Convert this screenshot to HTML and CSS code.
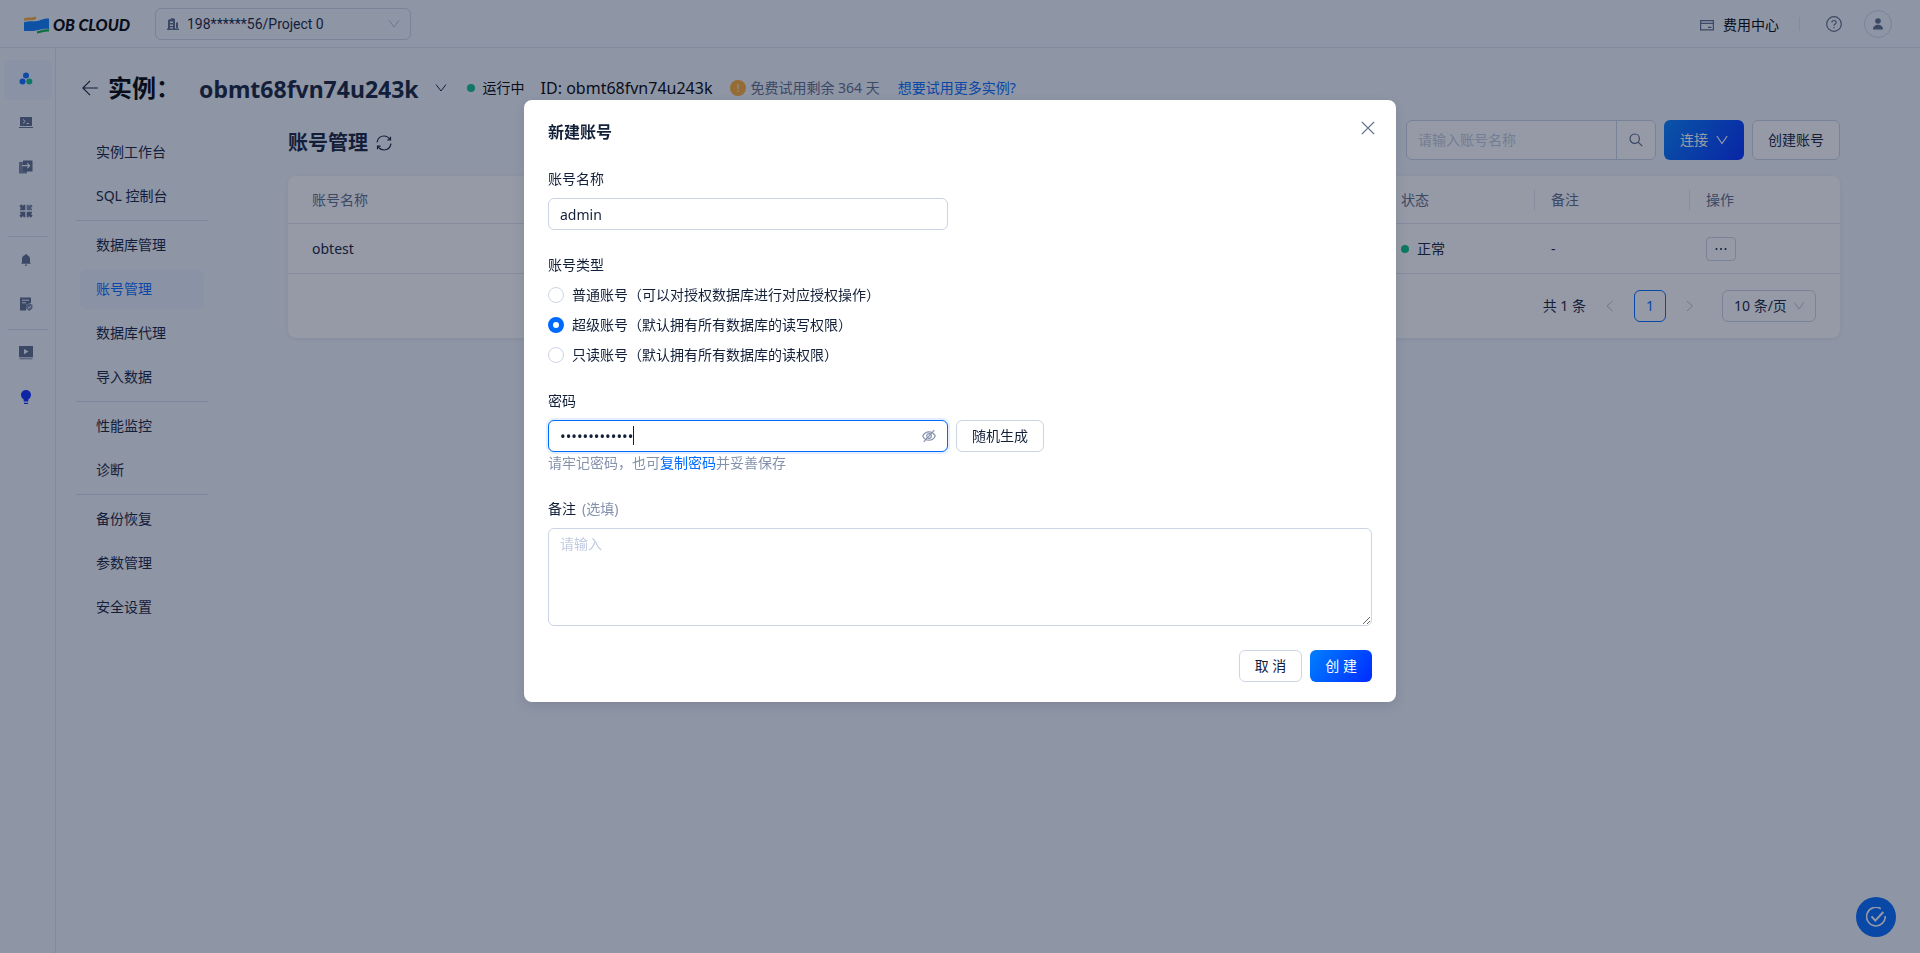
FILE: index.html
```html
<!DOCTYPE html>
<html lang="zh-CN">
<head>
<meta charset="utf-8">
<meta name="viewport" content="width=device-width, initial-scale=1">
<title>OB CLOUD - 账号管理</title>
<link rel="stylesheet" href="styles.css">
</head>
<body>
<div class="app">
  <header class="topbar">
    <a class="logo" href="#" aria-label="OB CLOUD">
      <svg width="26" height="18" viewBox="0 0 26 18" aria-hidden="true">
        <path d="M0 2.400C4 .9 7.500 2.300 12 .6V3.300C7.500 5 4 3.500 0 4.900z" fill="#ffac33"/>
        <path d="M0 6.200C6 4 11 6.400 16 4.200C19 3 22 2.300 25 2.500V13C20 12 16 13.600 12 14.500C7 15.500 4 14.600 0 15z" fill="#0a7cff"/>
        <path d="M13 15.300C17 14.600 20 12.600 25 13.300V15.600C21 15.200 17.500 17 13 17.600z" fill="#07b24c"/>
      </svg>
      <span class="logo-text">OB CLOUD</span>
    </a>
    <div class="select-wrap project">
      <svg class="lead" width="12" height="12" viewBox="0 0 12 12" aria-hidden="true">
        <path fill="#5c6b8a" fill-rule="evenodd" d="M1 2L5.500 0L8 1V10.500H12V12H0V10.500H1zM3 3.500V5H6V3.500zM3 6.500V8H6V6.500zM3 9.200V10.500H6V9.200zM9 4.500H11V10H9z"/>
      </svg>
      <select class="select" aria-label="项目"><option>198******56/Project 0</option></select>
      <svg class="tail" width="12" height="12" viewBox="0 0 12 12" aria-hidden="true"><path d="M1.200 2.500L6 9L10.800 2.500" fill="none" stroke="#b6c0d6"/></svg>
    </div>
    <div class="top-actions">
      <a class="billing" href="#">
        <svg width="14" height="12" viewBox="0 0 14 12" aria-hidden="true"><path d="M.6 1.600H13.400V10.900H.6zM.6 4.300H13.400M8 8.400H11.500" fill="none" stroke="#5c6b8a" stroke-width="1.200"/></svg>
        <span>费用中心</span>
      </a>
      <span class="vline"></span>
      <button class="icon-btn help" aria-label="帮助">
        <svg width="16" height="16" viewBox="0 0 16 16" fill="none" stroke="#5c6b8a" stroke-width="1.200"><circle cx="8" cy="8" r="7.300"/><path d="M5.900 6.500C5.900 3.800 10.200 3.900 10.200 6.400C10.200 7.900 8 7.900 8 9.700"/><path d="M8 11V12.200"/></svg>
      </button>
      <button class="icon-btn avatar" aria-label="用户">
        <svg width="10" height="12" viewBox="0 0 10 12" fill="#5c6b8a"><circle cx="5" cy="3" r="2.800"/><path d="M0 11.500C0 5.300 10 5.300 10 11.500z"/></svg>
      </button>
    </div>
  </header>

  <div class="frame">
    <nav class="rail" aria-label="产品">
      <a class="rail-item active" href="#" aria-label="实例"><svg width="14" height="14" viewBox="0 0 14 14"><circle cx="7" cy="3.400" r="3" fill="#0a6cff"/><circle cx="3.500" cy="9.600" r="3" fill="#0a6cff"/><circle cx="10.300" cy="9.600" r="3" fill="#0ac185"/></svg></a>
      <a class="rail-item" href="#" aria-label="控制台"><svg width="14" height="12" viewBox="0 0 14 12"><path d="M1 0H13V9H1zM0 10H14V11H0z" fill="#5c6b8a"/><path d="M4 2.400L6.200 4.400L4 6.400M7.500 6.500H10" fill="none" stroke="#f3f6fd"/></svg></a>
      <a class="rail-item" href="#" aria-label="迁移"><svg width="14" height="14" viewBox="0 0 14 14"><path d="M0 2H8V13.500H0z" fill="#7887a6"/><path d="M4 .5H13.500V11.500H4z" fill="#5c6b8a"/><path d="M3 5.700H10.500M8.200 3.300L10.700 5.700L8.200 8.100" fill="none" stroke="#f3f6fd" stroke-width="1.200"/></svg></a>
      <a class="rail-item" href="#" aria-label="集成"><svg width="14" height="14" viewBox="0 0 14 14"><g fill="#5c6b8a"><path d="M6.300 6.300H1V4.500H2.500L.3 2.300L2.300 .3L4.300 2.300V.8H6.300z"/><path d="M6.300 7.700H1V9.500H2.500L.3 11.700L2.300 13.700L4.300 11.700V13.200H6.300z"/><path d="M7.700 7.700H13V9.500H11.500L13.700 11.700L11.700 13.700L9.700 11.700V13.200H7.700z"/></g><path fill="#7887a6" d="M7.700 6.300H13V4.500H11.500L13.700 2.300L11.700 .3L9.700 2.300V.8H7.700z"/></svg></a>
      <hr class="rail-line">
      <a class="rail-item" href="#" aria-label="告警"><svg width="12" height="12" viewBox="0 0 12 12" fill="#5c6b8a"><path d="M5.300 0H6.700V1C9 1.400 10 3.200 10 5V8.500L11 9.700H1L2 8.500V5C2 3.200 3 1.400 5.300 1zM5 10.500H7V11.700H5z"/></svg></a>
      <a class="rail-item" href="#" aria-label="审计"><svg width="14" height="14" viewBox="0 0 14 14"><path d="M1 .5H12V6L7 7.500V13.500H1z" fill="#5c6b8a"/><path d="M3 3.200H10M3 5.800H7" stroke="#f3f6fd"/><path d="M10.200 6.600L13.500 7.800V10C13.500 12 12 13 10.200 13.800C8.500 13 7 12 7 10V7.800z" fill="#7887a6"/><path d="M8.600 10.100L10 11.300L12 9" fill="none" stroke="#f3f6fd"/></svg></a>
      <hr class="rail-line">
      <a class="rail-item" href="#" aria-label="视频"><svg width="14" height="14" viewBox="0 0 14 14"><path d="M0 0H14V11.300H0z" fill="#5c6b8a"/><path d="M5 3V8.200L9.500 5.600z" fill="#f3f6fd"/><path d="M.5 12.800H13.500" stroke="#7887a6"/></svg></a>
      <a class="rail-item" href="#" aria-label="提示"><svg width="12" height="14" viewBox="0 0 12 14" fill="#0a2bff"><path d="M6 0C9 0 11 2.200 11 5C11 7.200 9.500 8.500 8.300 9.400V11.500H3.700V9.400C2.500 8.500 1 7.200 1 5C1 2.200 3 0 6 0zM4 12.700H8V14H4z"/></svg></a>
    </nav>

    <main class="main">
      <div class="instance-head">
        <button class="icon-btn back" aria-label="返回"><svg width="16" height="16" viewBox="0 0 16 16"><path d="M15.800 8H1M8 .8L.9 8L8 15.200" fill="none" stroke="#132039" stroke-width="1.200"/></svg></button>
        <span class="instance-label">实例：</span>
        <h1 class="instance-name">obmt68fvn74u243k</h1>
        <button class="icon-btn switch" aria-label="切换实例"><svg width="12" height="12" viewBox="0 0 12 12"><path d="M1 2.500L6 9L11 2.500" fill="none" stroke="#132039"/></svg></button>
        <span class="state"><i class="dot"></i>运行中</span>
        <span class="instance-id">ID: obmt68fvn74u243k</span>
        <span class="trial"><svg width="16" height="16" viewBox="0 0 16 16"><circle cx="8" cy="8" r="8" fill="#ffac33"/><path d="M8 4V9M8 10.500V12" stroke="#f7dcb0" stroke-width="1.600"/></svg>免费试用剩余 364 天</span>
        <a class="link" href="#">想要试用更多实例?</a>
      </div>

      <div class="columns">
        <nav class="menu" aria-label="实例菜单">
          <a href="#">实例工作台</a>
          <a href="#">SQL 控制台</a>
          <hr>
          <a href="#">数据库管理</a>
          <a href="#" class="active">账号管理</a>
          <a href="#">数据库代理</a>
          <a href="#">导入数据</a>
          <hr>
          <a href="#">性能监控</a>
          <a href="#">诊断</a>
          <hr>
          <a href="#">备份恢复</a>
          <a href="#">参数管理</a>
          <a href="#">安全设置</a>
        </nav>

        <section class="content">
          <div class="toolbar">
            <div class="page-title">
              <h2>账号管理</h2>
              <button class="icon-btn" aria-label="刷新"><svg width="16" height="16" viewBox="0 0 16 16" fill="none" stroke="#132039" stroke-width="1.200"><path d="M1 7.300C1.700 3.500 4.500 1 8 1C10.700 1 12.600 2.300 13.900 4.300M15 8.700C14.300 12.500 11.500 15 8 15C5.300 15 3.400 13.700 2.100 11.700"/><path d="M14.500 1.700V4.800H11.400M1.500 14.300V11.200H4.600"/></svg></button>
            </div>
            <form class="search">
              <input type="text" placeholder="请输入账号名称" aria-label="账号名称搜索">
              <button type="button" aria-label="搜索"><svg width="14" height="14" viewBox="0 0 14 14" fill="none" stroke="#5c6b8a" stroke-width="1.200"><circle cx="5.700" cy="5.700" r="4.700"/><path d="M9.200 9.200L13.200 13.200"/></svg></button>
            </form>
            <button class="btn primary large">连接<svg width="12" height="12" viewBox="0 0 12 12"><path d="M.8 2L6 9.500L11.200 2" fill="none" stroke="#fff" stroke-width="1.200"/></svg></button>
            <button class="btn large">创建账号</button>
          </div>

          <div class="card">
            <table>
              <colgroup><col><col class="c-state"><col class="c-note"><col class="c-action"></colgroup>
              <thead><tr><th>账号名称</th><th>状态</th><th>备注</th><th>操作</th></tr></thead>
              <tbody><tr>
                <td>obtest</td>
                <td><span class="status"><i class="dot"></i>正常</span></td>
                <td>-</td>
                <td><button class="more" aria-label="更多"><svg width="12" height="2" viewBox="0 0 12 2" fill="#132039"><circle cx="1.500" cy="1" r="1"/><circle cx="6" cy="1" r="1"/><circle cx="10.500" cy="1" r="1"/></svg></button></td>
              </tr></tbody>
            </table>
            <div class="pager">
              <span>共 1 条</span>
              <button class="arrow" aria-label="上一页"><svg width="10" height="12" viewBox="0 0 10 12"><path d="M7.500 1L2 6L7.500 11" fill="none" stroke="#b6c0d6"/></svg></button>
              <button class="page">1</button>
              <button class="arrow" aria-label="下一页"><svg width="10" height="12" viewBox="0 0 10 12"><path d="M2 1L7.500 6L2 11" fill="none" stroke="#b6c0d6"/></svg></button>
              <div class="select-wrap size">
                <select class="select" aria-label="每页条数"><option>10 条/页</option></select>
                <svg class="tail" width="12" height="12" viewBox="0 0 12 12" aria-hidden="true"><path d="M1.200 2.500L6 9L10.800 2.500" fill="none" stroke="#b6c0d6"/></svg>
              </div>
            </div>
          </div>
        </section>
      </div>
    </main>
  </div>
  <button class="fab" aria-label="任务">
    <svg width="20" height="20" viewBox="0 0 20 20" fill="none" stroke="#fff"><path d="M14.800 1.700A9.300 9.300 0 1 0 19.200 9" stroke-width="1.600"/><path d="M5.500 9.300L9.300 13.600L17.300 5" stroke-width="2"/></svg>
  </button>
</div>

<div class="mask">
  <form class="modal" role="dialog" aria-modal="true" aria-labelledby="dlg-title">
    <button type="button" class="icon-btn close" aria-label="关闭"><svg width="14" height="14" viewBox="0 0 14 14"><path d="M.8 .8L13.200 13.200M13.200 .8L.8 13.200" stroke="#5c6b8a" stroke-width="1.200"/></svg></button>
    <h3 id="dlg-title">新建账号</h3>

    <div class="field">
      <label for="acc-name">账号名称</label>
      <input class="input" id="acc-name" type="text" value="admin">
    </div>

    <fieldset class="field">
      <legend>账号类型</legend>
      <div class="radios">
        <label><input type="radio" name="type">普通账号（可以对授权数据库进行对应授权操作）</label>
        <label><input type="radio" name="type" checked>超级账号（默认拥有所有数据库的读写权限）</label>
        <label><input type="radio" name="type">只读账号（默认拥有所有数据库的读权限）</label>
      </div>
    </fieldset>

    <div class="field">
      <label for="acc-pass">密码</label>
      <div class="pass-row">
        <div class="pass">
          <input class="input focused" id="acc-pass" type="password" value="Ab3456789012#">
          <span class="caret"></span>
          <button type="button" class="icon-btn eye" aria-label="显示密码"><svg width="14" height="14" viewBox="0 0 14 14" fill="none" stroke="#8592ad" stroke-width="1.200"><path d="M.7 7C3.500 1.400 10.500 1.400 13.300 7C10.500 12.600 3.500 12.600 .7 7z"/><circle cx="7" cy="7" r="2.300"/><path d="M12.300 1.200L1.700 12.800"/></svg></button>
        </div>
        <button type="button" class="btn">随机生成</button>
      </div>
      <p class="hint">请牢记密码，也可<a href="#">复制密码</a>并妥善保存</p>
    </div>

    <div class="field">
      <label for="acc-note">备注<span class="optional">(选填)</span></label>
      <textarea class="input" id="acc-note" placeholder="请输入"></textarea>
    </div>

    <div class="footer">
      <button type="button" class="btn">取 消</button>
      <button type="button" class="btn primary">创 建</button>
    </div>
  </form>
</div>
</body>
</html>
```

FILE: styles.css
```css
* { box-sizing: border-box; }

body {
  margin: 0;
  background: #f3f6fd;
  color: #132039;
  font: 14px/22px "Noto Sans", "Noto Sans CJK SC", sans-serif;
}

a { color: inherit; text-decoration: none; }
button, input, select, textarea { font: inherit; color: inherit; }
button { cursor: pointer; }
svg { display: block; flex: none; }
h1, h2, h3, p { margin: 0; }

.app {
  display: flex;
  flex-direction: column;
  min-height: 100vh;
}

.icon-btn {
  display: flex;
  align-items: center;
  justify-content: center;
  padding: 0;
  border: 0;
  background: none;
}

.dot {
  flex: none;
  width: 8px;
  height: 8px;
  border-radius: 50%;
  background: #0ac185;
}

/* Top bar */
.topbar {
  display: flex;
  align-items: center;
  height: 48px;
  padding: 0 28px 0 24px;
  border-bottom: 1px solid #dde4ee;
}

.logo {
  display: flex;
  align-items: center;
  gap: 3px;
  width: 131px;
  padding-top: 2px;
}

.logo-text {
  color: #000;
  font: italic 900 16px/18px Lato, sans-serif;
  white-space: nowrap;
}

.select-wrap {
  position: relative;
  height: 32px;
}

.select {
  width: 100%;
  height: 100%;
  padding: 0 28px 0 11px;
  border: 1px solid #cdd5e4;
  border-radius: 6px;
  background: transparent;
  appearance: none;
}

.project { width: 256px; }

.project .select {
  padding-left: 31px;
  font-family: Roboto, "Noto Sans", sans-serif;
}

.select-wrap svg {
  position: absolute;
  top: 10px;
  pointer-events: none;
}

.select-wrap .lead { left: 12px; }
.select-wrap .tail { right: 11px; }

.top-actions {
  display: flex;
  align-items: center;
  margin-left: auto;
}

.billing {
  display: flex;
  align-items: center;
  gap: 9px;
  padding-top: 2px;
  color: #000;
}

.vline {
  width: 1px;
  height: 14px;
  margin: 0 26px 0 20px;
  background: #dde4ee;
}

.avatar {
  width: 28px;
  height: 28px;
  margin-left: 22px;
  border: 1px solid #cdd5e4;
  border-radius: 50%;
}

/* Icon rail */
.frame {
  display: flex;
  flex: 1;
}

.rail {
  display: flex;
  flex-direction: column;
  gap: 4px;
  width: 56px;
  padding: 12px 3px 0 4px;
  border-right: 1px solid #dde4ee;
}

.rail-item {
  display: flex;
  align-items: center;
  justify-content: center;
  height: 40px;
  padding: 0 4px 2px 0;
  border-radius: 8px;
}

.rail-item.active, .menu a.active { background: #ebf1ff; }

.rail-line, .menu hr {
  width: 100%;
  height: 1px;
  margin: 0;
  border: 0;
  background: #d3dbea;
}

.rail-line { width: 40px; margin-left: 4px; }

/* Instance heading */
.main { flex: 1; min-width: 0; }

.instance-head {
  display: flex;
  align-items: center;
  height: 72px;
  padding: 8px 26px 0;
  white-space: nowrap;
}

.back { margin-right: 10px; }

.instance-label {
  width: 91px;
  color: #000;
  font-size: 24px;
  font-weight: 700;
  line-height: 32px;
}

.instance-name {
  padding-top: 2px;
  font-size: 23px;
  line-height: 32px;
}

.switch { margin: 0 20px 0 16px; }

.state {
  display: flex;
  align-items: center;
  gap: 8px;
  margin-right: 16px;
  color: #000;
}

.instance-id {
  margin-right: 18px;
  color: #000;
  font-size: 16px;
}

.trial {
  display: flex;
  align-items: center;
  gap: 4px;
  margin-right: 18px;
  color: #5c6b8a;
}

.link { color: #006aff; }

.columns {
  display: flex;
  gap: 80px;
  padding: 0 80px 0 20px;
}

/* Instance menu */
.menu {
  display: flex;
  flex: none;
  flex-direction: column;
  gap: 4px;
  width: 132px;
  padding-top: 12px;
}

.menu a {
  margin: 0 4px;
  padding: 9px 16px;
  border-radius: 8px;
}

.menu a.active { color: #006aff; }

/* Toolbar */
.content { flex: 1; min-width: 0; }

.toolbar {
  display: flex;
  align-items: center;
  gap: 8px;
  margin-bottom: 16px;
}

.page-title {
  display: flex;
  align-items: center;
  gap: 8px;
  padding-top: 5px;
}

.page-title h2 {
  font-size: 20px;
  line-height: 28px;
}

.search {
  display: flex;
  width: 250px;
  height: 40px;
  margin-left: auto;
  border: 1px solid #cdd5e4;
  border-radius: 6px;
  background: #fff;
  overflow: hidden;
}

.search input {
  flex: 1;
  min-width: 0;
  padding: 0 11px;
  border: 0;
  background: none;
}

::placeholder { color: #c1cbe0; opacity: 1; }

.search button {
  display: flex;
  align-items: center;
  justify-content: center;
  width: 39px;
  padding: 0;
  border: 0;
  border-left: 1px solid #cdd5e4;
  background: none;
}

.btn {
  display: flex;
  align-items: center;
  justify-content: center;
  gap: 8px;
  height: 32px;
  padding: 0 15px;
  border: 1px solid #cdd5e4;
  border-radius: 6px;
  background: #fff;
  white-space: nowrap;
}

.btn.large { height: 40px; }

.btn.primary {
  border: 0;
  background: linear-gradient(125deg, #0080ff, #002bff);
  color: #fff;
}

.btn.primary.large { width: 80px; }

/* Account table */
.card {
  border-radius: 8px;
  background: #fff;
  box-shadow: 0 1px 4px rgba(19, 32, 57, 0.08);
}

table {
  width: 100%;
  border-spacing: 0;
  table-layout: fixed;
}

.c-state { width: 150px; }
.c-note { width: 155px; }
.c-action { width: 150px; }

th, td {
  height: 50px;
  padding: 0 16px;
  border-bottom: 1px solid #e2e8f3;
  text-align: left;
}

th {
  position: relative;
  height: 48px;
  color: #5c6b8a;
  font-weight: 400;
}

th:nth-child(2)::after, th:nth-child(3)::after {
  content: "";
  position: absolute;
  top: 13px;
  right: 0;
  width: 1px;
  height: 22px;
  background: #e2e8f3;
}

th:first-child, td:first-child { padding-left: 24px; }

.status {
  display: flex;
  align-items: center;
  gap: 8px;
}

.more {
  display: flex;
  align-items: center;
  justify-content: center;
  width: 30px;
  height: 24px;
  padding: 0;
  border: 1px solid #cdd5e4;
  border-radius: 4px;
  background: #fff;
}

.pager {
  display: flex;
  align-items: center;
  justify-content: flex-end;
  padding: 16px 24px;
}

.arrow {
  display: flex;
  align-items: center;
  justify-content: center;
  width: 32px;
  height: 32px;
  margin: 0 8px;
  padding: 0;
  border: 0;
  background: none;
}

.page {
  width: 32px;
  height: 32px;
  padding: 0;
  border: 1px solid #006aff;
  border-radius: 6px;
  background: #fff;
  color: #006aff;
}

.size { width: 94px; margin-left: 8px; }

.fab {
  position: fixed;
  right: 24px;
  bottom: 16px;
  display: flex;
  align-items: center;
  justify-content: center;
  width: 40px;
  height: 40px;
  padding: 0;
  border: 0;
  border-radius: 50%;
  background: #006aff;
}

/* Dialog */
.mask {
  position: fixed;
  inset: 0;
  display: flex;
  align-items: flex-start;
  justify-content: center;
  padding-top: 100px;
  background: rgba(19, 32, 57, 0.45);
  overflow: auto;
}

.modal {
  position: relative;
  display: flex;
  flex-direction: column;
  gap: 24px;
  width: 872px;
  max-width: 100%;
  padding: 20px 24px;
  border-radius: 8px;
  background: #fff;
  box-shadow: 0 4px 12px rgba(19, 32, 57, 0.12);
}

.modal h3 {
  font-size: 16px;
  font-weight: 700;
  line-height: 24px;
}

.close {
  position: absolute;
  top: 20px;
  right: 20px;
  width: 16px;
  height: 16px;
}

.field {
  display: flex;
  flex-direction: column;
  margin: 0;
  padding: 0;
  border: 0;
}

.field > label, .field legend {
  margin-bottom: 8px;
  padding: 0;
}

.input {
  width: 400px;
  max-width: 100%;
  height: 32px;
  padding: 4px 11px;
  border: 1px solid #cdd5e4;
  border-radius: 6px;
  outline: none;
  background: #fff;
}

.input.focused {
  border-color: #006aff;
  box-shadow: 0 0 0 2px rgba(0, 106, 255, 0.1);
}

.pass .input { font-size: 15px; }

textarea.input {
  width: 100%;
  height: 98px;
  resize: vertical;
}

.radios {
  display: flex;
  flex-direction: column;
  gap: 8px;
}

.radios label {
  display: flex;
  align-items: center;
  gap: 8px;
}

.radios input {
  width: 16px;
  height: 16px;
  margin: 0;
  border: 1px solid #cdd5e4;
  border-radius: 50%;
  background: #fff;
  appearance: none;
}

.radios input:checked { border: 5px solid #006aff; }

.pass-row {
  display: flex;
  gap: 8px;
}

.pass { position: relative; }

.caret {
  position: absolute;
  top: 6px;
  left: 85px;
  width: 1px;
  height: 19px;
  background: #132039;
}

.eye {
  position: absolute;
  top: 9px;
  right: 12px;
}

.hint, .optional { color: #8592ad; }
.optional { margin-left: 6px; }
.hint a { color: #006aff; }

.footer {
  display: flex;
  justify-content: flex-end;
  gap: 8px;
}
```
